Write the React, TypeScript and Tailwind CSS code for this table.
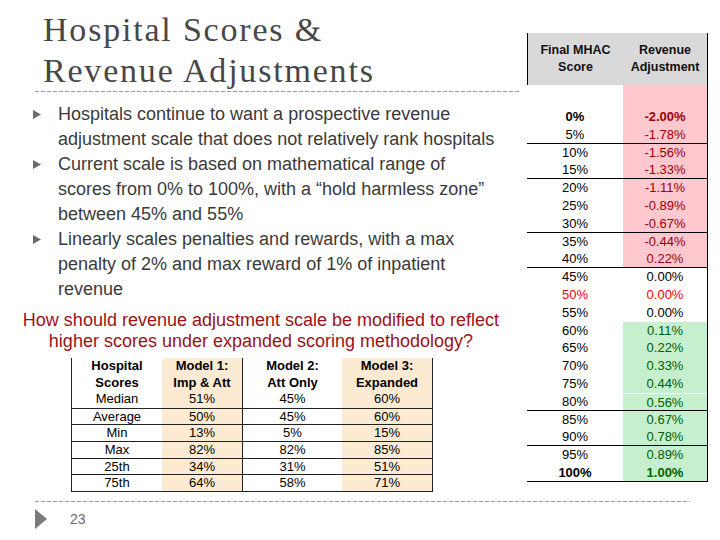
import React from "react";

const rightRows: { s: string; a: string; zone: "pink" | "none" | "green"; line?: boolean; bold?: boolean; red?: boolean; whiteTop?: boolean }[] = [
  { s: "0%", a: "-2.00%", zone: "pink", bold: true },
  { s: "5%", a: "-1.78%", zone: "pink", line: true },
  { s: "10%", a: "-1.56%", zone: "pink" },
  { s: "15%", a: "-1.33%", zone: "pink", line: true },
  { s: "20%", a: "-1.11%", zone: "pink" },
  { s: "25%", a: "-0.89%", zone: "pink" },
  { s: "30%", a: "-0.67%", zone: "pink", line: true },
  { s: "35%", a: "-0.44%", zone: "pink" },
  { s: "40%", a: "0.22%", zone: "pink", line: true },
  { s: "45%", a: "0.00%", zone: "none" },
  { s: "50%", a: "0.00%", zone: "none", red: true },
  { s: "55%", a: "0.00%", zone: "none" },
  { s: "60%", a: "0.11%", zone: "green" },
  { s: "65%", a: "0.22%", zone: "green" },
  { s: "70%", a: "0.33%", zone: "green" },
  { s: "75%", a: "0.44%", zone: "green" },
  { s: "80%", a: "0.56%", zone: "green", line: true, whiteTop: true },
  { s: "85%", a: "0.67%", zone: "green" },
  { s: "90%", a: "0.78%", zone: "green", line: true },
  { s: "95%", a: "0.89%", zone: "green" },
  { s: "100%", a: "1.00%", zone: "green", bold: true, line: true },
];

const leftRows = [
  ["Median", "51%", "45%", "60%"],
  ["Average", "50%", "45%", "60%"],
  ["Min", "13%", "5%", "15%"],
  ["Max", "82%", "82%", "85%"],
  ["25th", "34%", "31%", "51%"],
  ["75th", "64%", "58%", "71%"],
];

function Bullet() {
  return (
    <svg width="8" height="9" viewBox="0 0 8 9" className="shrink-0 mt-[8px]">
      <polygon points="0,0 8,4.5 0,9" fill="#6b6b6b" />
    </svg>
  );
}

function BulletItem({ children }: { children: React.ReactNode }) {
  return (
    <div className="flex items-start">
      <div className="w-[27px] shrink-0 pl-[2px]">
        <Bullet />
      </div>
      <div>{children}</div>
    </div>
  );
}

const dash =
  "h-px bg-[linear-gradient(to_right,#9a9a9a_0,#9a9a9a_4px,transparent_4px,transparent_6px)] bg-[length:6px_1px] bg-repeat-x";

export default function App() {
  return (
    <div className="w-[720px] h-[540px] bg-white overflow-hidden">
      <div className="flex">
        {/* Left column */}
        <div className="w-[522px] shrink-0">
          <div
            className="pl-[43px] pt-[9px] text-[34px] leading-[41px] tracking-[1.8px] text-[#474747]"
            style={{ fontFamily: '"Liberation Serif", "Times New Roman", serif' }}
          >
            <div>Hospital Scores &amp;</div>
            <div>Revenue Adjustments</div>
          </div>
          <div className={`ml-[35px] w-[485px] ${dash}`} />

          <div
            className="pl-[31px] pt-[10px] text-[18px] leading-[25px] text-[#3a3a3a]"
            style={{ fontFamily: '"Liberation Sans", Arial, sans-serif' }}
          >
            <BulletItem>
              Hospitals continue to want a prospective revenue
              <br />
              adjustment scale that does not relatively rank hospitals
            </BulletItem>
            <BulletItem>
              Current scale is based on mathematical range of
              <br />
              scores from 0% to 100%, with a “hold harmless zone”
              <br />
              between 45% and 55%
            </BulletItem>
            <BulletItem>
              Linearly scales penalties and rewards, with a max
              <br />
              penalty of 2% and max reward of 1% of inpatient
              <br />
              revenue
            </BulletItem>
          </div>

          <div
            className="mt-[8px] text-center text-[18px] leading-[21px] text-[#9b1219]"
            style={{ fontFamily: '"Liberation Sans", Arial, sans-serif' }}
          >
            How should revenue adjustment scale be modified to reflect
            <br />
            higher scores under expanded scoring methodology?
          </div>

          {/* Left table */}
          <div
            className="ml-[71px] mt-[6px] w-[362px] border-l border-r border-[#222] text-[13px] leading-[16.6px] text-black"
            style={{ fontFamily: '"Liberation Sans", Arial, sans-serif' }}
          >
            <div className="flex">
              <div className="w-[90px] text-center font-bold">
                Hospital
                <br />
                Scores
                <br />
                <span className="font-normal">Median</span>
              </div>
              <div className="w-[81px] text-center font-bold bg-[#fcebd2] border-r border-[#222]">
                Model 1:
                <br />
                Imp &amp; Att
                <br />
                <span className="font-normal">51%</span>
              </div>
              <div className="w-[99px] text-center font-bold">
                Model 2:
                <br />
                Att Only
                <br />
                <span className="font-normal">45%</span>
              </div>
              <div className="flex-1 text-center font-bold bg-[#fcebd2]">
                Model 3:
                <br />
                Expanded
                <br />
                <span className="font-normal">60%</span>
              </div>
            </div>
            <div className="border-t border-[#222]" />
            {leftRows.slice(1).map((r) => (
              <div key={r[0]} className="flex h-[16.6px] border-b border-[#222]">
                <div className="w-[90px] text-center">{r[0]}</div>
                <div className="w-[81px] text-center bg-[#fcebd2] border-r border-[#222]">{r[1]}</div>
                <div className="w-[99px] text-center">{r[2]}</div>
                <div className="flex-1 text-center bg-[#fcebd2]">{r[3]}</div>
              </div>
            ))}
          </div>
        </div>

        {/* Right table */}
        <div className="pl-[5px] pt-[33px]">
          <div
            className="w-[181px] border-r border-black text-[13px] text-black"
            style={{ fontFamily: '"Liberation Sans", Arial, sans-serif' }}
          >
            <div className="flex h-[52px] bg-[#d9d9d9] font-bold text-[12.5px] leading-[17px] text-[#111]">
              <div className="w-[96px] border-l border-black flex items-center justify-center text-center">
                Final MHAC
                <br />
                Score
              </div>
              <div className="flex-1 flex items-center justify-center text-center">
                Revenue
                <br />
                Adjustment
              </div>
            </div>
            <div className="flex h-[23px]">
              <div className="w-[96px]" />
              <div className="flex-1 bg-[#ffc7ce]" />
            </div>
            {rightRows.map((r) => {
              const rightBg =
                r.zone === "pink" ? "bg-[#ffc7ce]" : r.zone === "green" ? "bg-[#c6efce]" : "";
              const rightColor = r.red
                ? "text-[#ff0000]"
                : r.zone === "pink"
                ? "text-[#9c0006]"
                : r.zone === "green"
                ? "text-[#006100]"
                : "text-black";
              return (
                <div
                  key={r.s}
                  className={`flex h-[17.8px] leading-[17px] ${r.line ? "border-b border-black" : ""} ${
                    r.bold ? "font-bold" : ""
                  }`}
                >
                  <div className={`w-[96px] text-center ${r.red ? "text-[#ff0000]" : "text-black"}`}>{r.s}</div>
                  <div
                    className={`flex-1 text-center ${rightBg} ${rightColor} ${
                      r.whiteTop ? "border-t border-white" : ""
                    }`}
                  >
                    {r.a}
                  </div>
                </div>
              );
            })}
          </div>
        </div>
      </div>

      {/* Footer */}
      <div className={`ml-[35px] mt-[9px] w-[655px] ${dash}`} />
      <div className="flex items-center pl-[35px] pt-[7px]">
        <svg width="12" height="20" viewBox="0 0 12 20">
          <polygon points="0,0 12,10 0,20" fill="#7a7a7a" />
        </svg>
        <span
          className="ml-[23px] text-[14px] text-[#6b6b6b]"
          style={{ fontFamily: '"Liberation Sans", Arial, sans-serif' }}
        >
          23
        </span>
      </div>
    </div>
  );
}
